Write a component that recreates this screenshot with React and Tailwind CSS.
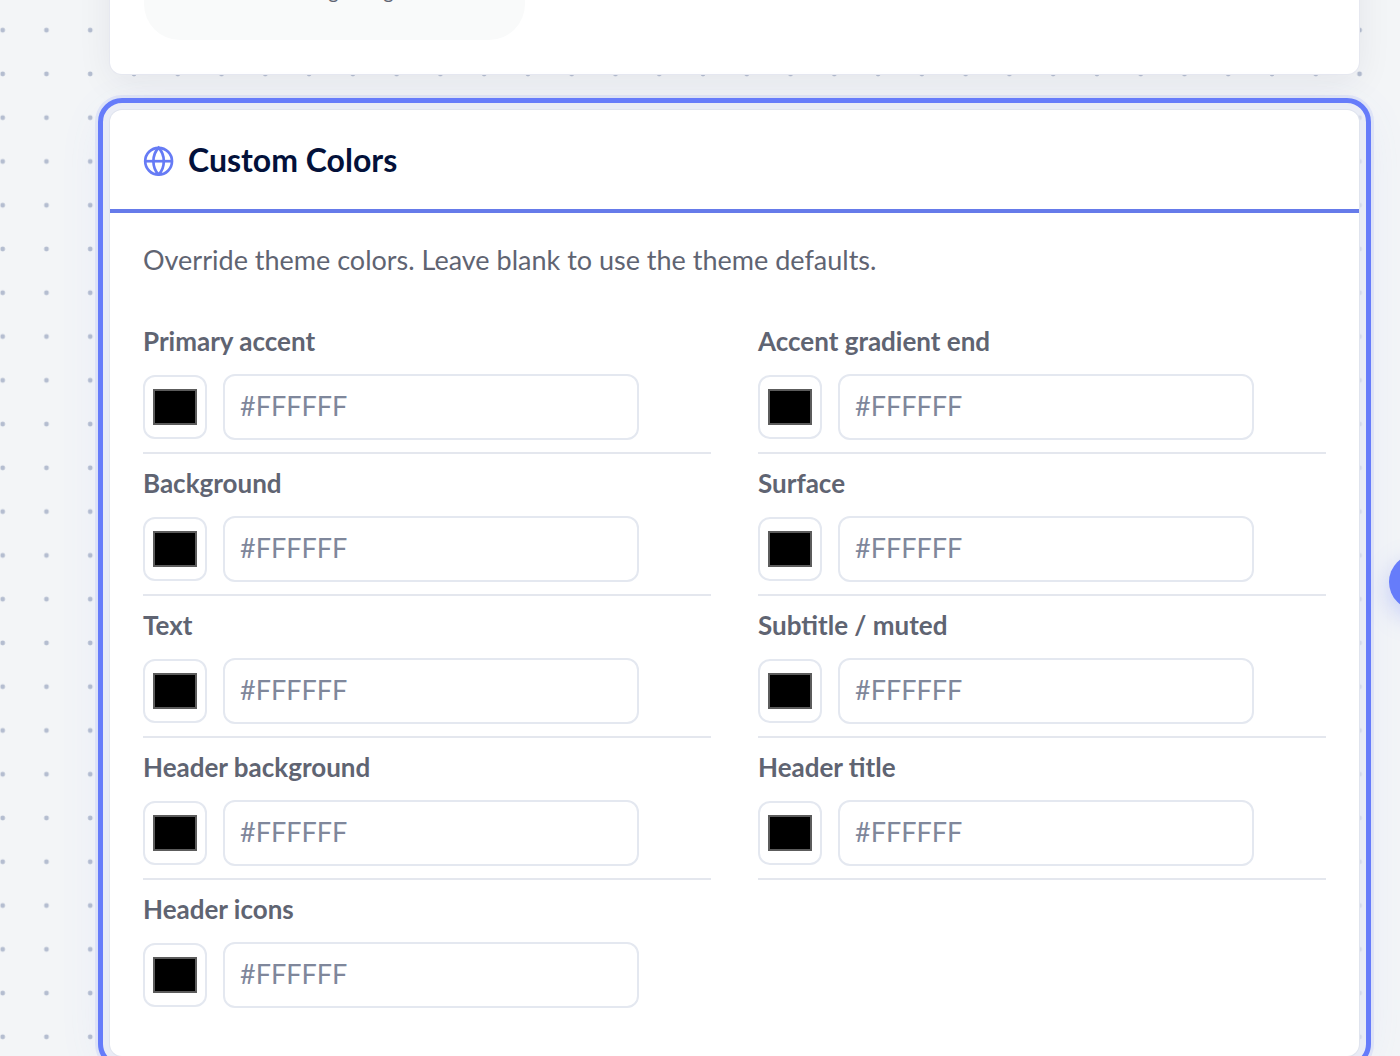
import { useState } from 'react';

const fields = [
  { id: 'primary', label: 'Primary accent' },
  { id: 'gradient-end', label: 'Accent gradient end' },
  { id: 'background', label: 'Background' },
  { id: 'surface', label: 'Surface' },
  { id: 'text', label: 'Text' },
  { id: 'muted', label: 'Subtitle / muted' },
  { id: 'header-background', label: 'Header background' },
  { id: 'header-title', label: 'Header title' },
  { id: 'header-icons', label: 'Header icons' },
];

const GlobeIcon = () => (
  <svg className="w-8 h-8 shrink-0" viewBox="0 0 32 32" fill="none" stroke="#667bf5" strokeWidth="2.7" aria-hidden="true">
    <circle cx="16.6" cy="17.2" r="13.4" />
    <path d="M3.2 17.2h26.8" />
    <path d="M16.6 3.8c3.6 3.7 5.2 8.200 5.200 13.400s-1.600 9.700-5.200 13.400c-3.600-3.700-5.200-8.200-5.200-13.400s1.600-9.700 5.200-13.400z" />
  </svg>
);

const DotGrid = () => (
  <svg className="absolute inset-0 w-full h-full" aria-hidden="true">
    <defs>
      <pattern id="dots" x="-19.2" y="8.3" width="43.77" height="43.77" patternUnits="userSpaceOnUse">
        <circle cx="21.9" cy="21.9" r="2.4" fill="#b4bdd0" />
      </pattern>
    </defs>
    <rect width="100%" height="100%" fill="url(#dots)" />
  </svg>
);

const ColorField = ({ id, label, value, onChange }) => {
  return (
    <div className="pt-[13px] pb-3 border-b-2 border-[#e4e7ee] last:border-b-0">
      <label htmlFor={id} className="block mb-[17px] text-[26px] leading-8 font-bold text-[#5f6472]">
        {label}
      </label>
      <div className="flex items-center gap-4">
        <input
          type="color"
          aria-label={label + ' picker'}
          value={value || '#000000'}
          onChange={(e) => onChange(id, e.target.value)}
          className="w-16 h-16 shrink-0 px-2 py-3 bg-white border-2 border-[#e4e8f0] rounded-xl [&::-webkit-color-swatch-wrapper]:p-0 [&::-webkit-color-swatch]:border-2 [&::-webkit-color-swatch]:border-[#5c5c5c] [&::-webkit-color-swatch]:rounded-none"
        />
        <input
          type="text"
          id={id}
          placeholder="#FFFFFF"
          value={value}
          onChange={(e) => onChange(id, e.target.value)}
          className="flex-1 min-w-0 max-w-[416px] h-[66px] px-[15px] pb-1 text-[27px] bg-white border-2 border-[#e4e8f0] rounded-xl text-[#5f6472] placeholder:text-[#7f879b]"
        />
      </div>
    </div>
  );
};

export default function App() {
  const [colors, setColors] = useState({});

  const updateColor = (id, value) => {
    setColors({ ...colors, [id]: value });
  };

  return (
    <div className="relative h-screen overflow-hidden bg-[#f3f5f7] font-[Lato,sans-serif]">
      <DotGrid />
      <main className="relative -mt-24 ml-[110px] mr-[41px] flex flex-col gap-9">
        <section className="p-[34px] bg-white rounded-xl shadow-[0_0_0_1px_#e6e8f0,0_8px_36px_rgba(30,30,60,0.07)]">
          <div className="w-[381px] max-w-full pt-9 pb-8 bg-[#f9fafa] rounded-b-[36px] text-center text-xl leading-[34px] text-[#5f6472]">
            A soft morning orange scene
          </div>
        </section>

        <section className="bg-white rounded-xl outline-[5px] outline-solid outline-offset-[7px] outline-[#667cfa] shadow-[0_0_0_1px_#e0e4ee,0_0_0_7px_#f0f2f6a0,0_0_0_15px_rgba(102,126,250,0.12),0_8px_52px_rgba(102,126,250,0.12)]">
          <div className="flex items-center gap-[14px] h-[103px] px-8 border-b-4 border-[#667bea]">
            <GlobeIcon />
            <h2 className="text-[32px] leading-10 font-bold text-[#03113a]">Custom Colors</h2>
          </div>
          <div className="px-[33px] pt-[27px] pb-9">
            <p className="mb-8 text-[27px] leading-10 text-[#5f6472]">
              Override theme colors. Leave blank to use the theme defaults.
            </p>
            <div className="grid grid-cols-2 gap-x-[47px]">
              {fields.map((field) => (
                <ColorField
                  key={field.id}
                  id={field.id}
                  label={field.label}
                  value={colors[field.id] || ''}
                  onChange={updateColor}
                />
              ))}
            </div>
          </div>
        </section>
      </main>
      <button
        type="button"
        aria-label="Help"
        className="absolute top-[554px] -right-[45px] w-14 h-14 rounded-full bg-[#667cfa] shadow-[0_8px_24px_rgba(102,126,250,0.35)]"
      ></button>
    </div>
  );
}
